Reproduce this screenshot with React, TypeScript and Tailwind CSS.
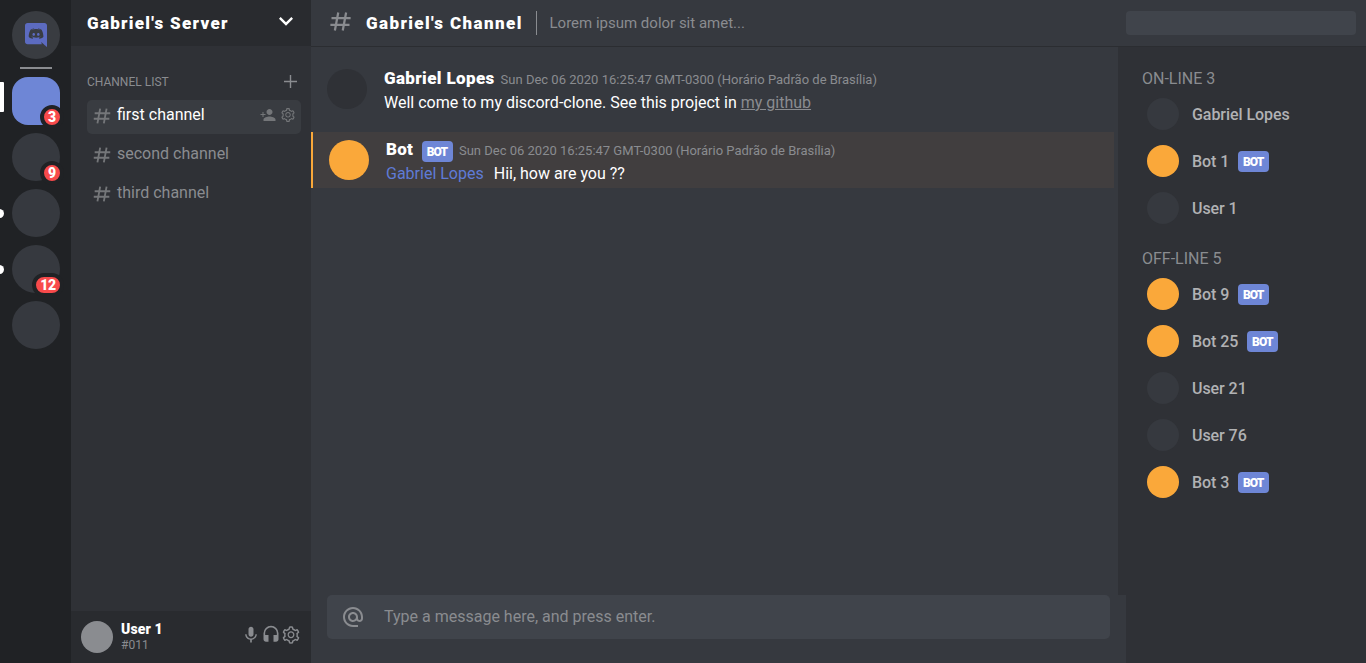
import React from "react";
import { MdExpandMore, MdAlternateEmail, MdMic, MdHeadset } from "react-icons/md";
import { AiOutlineSetting } from "react-icons/ai";
import { BiHash } from "react-icons/bi";
import { IoMdPersonAdd } from "react-icons/io";

type Server = { selected?: boolean; mentions?: number; unread?: boolean };
type Member = { name: string; bot?: boolean };

const servers: Server[] = [
  { selected: true, mentions: 3 },
  { mentions: 9 },
  { unread: true },
  { unread: true, mentions: 12 },
  {},
];

const online: Member[] = [
  { name: "Gabriel Lopes" },
  { name: "Bot 1", bot: true },
  { name: "User 1" },
];

const offline: Member[] = [
  { name: "Bot 9", bot: true },
  { name: "Bot 25", bot: true },
  { name: "User 21" },
  { name: "User 76" },
  { name: "Bot 3", bot: true },
];

const DATE = "Sun Dec 06 2020 16:25:47 GMT-0300 (Horário Padrão de Brasília)";

function DiscordLogo() {
  return (
    <svg viewBox="0 0 448 512" preserveAspectRatio="none" className="h-6 w-[22px] fill-[#5c6bc0]">
      <path d="M297.216 243.2c0 15.616-11.52 28.416-26.112 28.416-14.336 0-26.112-12.8-26.112-28.416s11.52-28.416 26.112-28.416c14.592 0 26.112 12.8 26.112 28.416zm-119.552-28.416c-14.592 0-26.112 12.8-26.112 28.416s11.776 28.416 26.112 28.416c14.592 0 26.112-12.8 26.112-28.416.256-15.616-11.52-28.416-26.112-28.416zM448 52.736V512c-64.494-56.994-43.868-38.128-118.784-107.776l13.568 47.36H52.48C23.552 451.584 0 428.032 0 398.848V52.736C0 23.552 23.552 0 52.48 0h343.04C424.448 0 448 23.552 448 52.736zm-72.96 242.688c0-82.432-36.864-149.248-36.864-149.248-36.864-27.648-71.936-26.88-71.936-26.88l-3.584 4.096c43.52 13.312 63.744 32.512 63.744 32.512-60.811-33.329-132.244-33.335-191.232-7.424-9.472 4.352-15.104 7.424-15.104 7.424s21.248-20.224 67.328-33.536l-2.56-3.072s-35.072-.768-71.936 26.88c0 0-36.864 66.816-36.864 149.248 0 0 21.504 37.12 78.08 38.912 0 0 9.472-11.52 17.152-21.248-32.512-9.728-44.8-30.208-44.8-30.208 3.766 2.636 9.976 6.053 10.496 6.4 43.21 24.198 104.588 32.126 159.744 8.96 8.96-3.328 18.944-8.192 29.44-15.104 0 0-12.8 20.992-46.336 30.464 7.68 9.728 16.896 20.736 16.896 20.736 56.576-1.792 78.336-38.912 78.336-38.912z" />
    </svg>
  );
}

function PlusIcon() {
  return (
    <svg viewBox="0 0 13 13" className="mb-px size-[13px] stroke-[#8a8c90]" strokeWidth={1.4}>
      <path d="M6.5 0v13M0 6.5h13" />
    </svg>
  );
}

function ServerButton({ selected, mentions, unread }: Server) {
  return (
    <div className="relative flex w-full justify-center">
      {selected && <span className="absolute top-[5px] left-0 h-[30px] w-1 rounded-r-[1px] bg-white" />}
      {unread && <span className="absolute top-5 -left-[5px] size-[9px] rounded-full bg-white" />}
      <div className={selected ? "relative size-12 rounded-2xl bg-[#6e86d6]" : "relative size-12 rounded-full bg-[#36393f]"}>
        {mentions && (
          <span className="absolute -right-1 -bottom-1 flex h-6 items-center rounded-full border-4 border-[#202225] bg-[#f84a4b] px-1 text-[14px] font-black tracking-[-0.5px] text-white">
            {mentions}
          </span>
        )}
      </div>
    </div>
  );
}

function ServerList() {
  return (
    <nav className="flex w-[71px] shrink-0 flex-col items-center gap-2 overflow-hidden bg-[#202225] pt-[11px]">
      <div className="flex w-full justify-center">
        <div className="flex size-12 items-center justify-center rounded-full bg-[#393c41]">
          <DiscordLogo />
        </div>
      </div>
      <div className="h-0.5 w-8 shrink-0 bg-[#8a8c90]" />
      {servers.map((server, i) => (
        <ServerButton key={i} {...server} />
      ))}
    </nav>
  );
}

function Channel({ name, selected }: { name: string; selected?: boolean }) {
  return (
    <div className={selected ? "flex h-[34px] items-center rounded-[5px] bg-[#393c41] pr-[5px] pl-1" : "flex h-[34px] items-center pr-[5px] pl-1"}>
      <BiHash size={22} className="mb-[3px] text-[#747679]" />
      <span className={selected ? "ml-1 flex-1 pb-1 text-white" : "ml-1 flex-1 pb-1 text-[#8a8c90]"}>{name}</span>
      {selected && (
        <div className="mb-1 flex items-center gap-1 text-[#747679]">
          <IoMdPersonAdd size={16} />
          <AiOutlineSetting size={16} />
        </div>
      )}
    </div>
  );
}

function ChannelPanel() {
  return (
    <aside className="flex w-60 shrink-0 flex-col bg-[#2f3136]">
      <header className="flex h-[46px] items-center justify-between bg-[#292b2f] pr-[11px] pl-4">
        <h1 className="pt-0.5 text-[17px] font-black tracking-[1.3px] text-white">Gabriel's Server</h1>
        <MdExpandMore size={28} className="mb-1 text-white" />
      </header>
      <div className="flex flex-1 flex-col gap-[5px] pt-[25px] pr-2.5 pl-4">
        <div className="mb-[3px] flex h-[21px] items-center justify-between pr-1">
          <span className="text-xs text-[#8a8c90]">CHANNEL LIST</span>
          <PlusIcon />
        </div>
        <Channel name="first channel" selected />
        <Channel name="second channel" />
        <Channel name="third channel" />
      </div>
      <footer className="flex h-[52px] items-center bg-[#292b2f] pr-2.5 pl-2.5">
        <div className="size-8 rounded-full bg-[#8a8c90]" />
        <div className="ml-2 flex flex-1 flex-col">
          <strong className="text-[14px] leading-[15px] font-black tracking-[0.1px] text-white">User 1</strong>
          <span className="mt-px text-xs leading-[15px] text-[#8a8c90]">#011</span>
        </div>
        <div className="mb-1 flex text-[#8a8c90]">
          <MdMic size={20} />
          <MdHeadset size={20} />
          <AiOutlineSetting size={20} />
        </div>
      </footer>
    </aside>
  );
}

function BotTag() {
  return (
    <span className="flex h-[21px] w-[31px] items-center justify-center rounded-[4px] bg-[#6e86d6] pt-px pr-px text-xs font-black tracking-[-0.8px] text-white">
      BOT
    </span>
  );
}

function Message({ author, bot, children }: { author: string; bot?: boolean; children: React.ReactNode }) {
  return (
    <div className={bot ? "mr-1 flex h-14 items-center border-l-2 border-[#faa83a] bg-[#413e3f] pl-4" : "mr-1 flex h-14 items-center pl-4"}>
      <div className={bot ? "size-10 rounded-full bg-[#faa83a]" : "size-10 rounded-full bg-[#2f3136]"} />
      <div className={bot ? "ml-[17px] flex flex-col pt-[3px]" : "ml-[17px] flex flex-col pt-1"}>
        <div className="flex h-6 items-center">
          <strong className={bot ? "text-[17px] font-black tracking-[0.2px] text-white" : "text-[17px] font-black tracking-[0.37px] text-white"}>
            {author}
          </strong>
          {bot && (
            <span className="mt-[3px] ml-[9px]">
              <BotTag />
            </span>
          )}
          <time className="mt-0.5 ml-1.5 text-[13px] text-[#8a8c90]">{DATE}</time>
        </div>
        <p className="leading-6 text-white">{children}</p>
      </div>
    </div>
  );
}

function MemberGroup({ title, members }: { title: string; members: Member[] }) {
  return (
    <section className="flex flex-col">
      <h2 className="h-5 leading-[22px] text-[#8a8c90]">{title}</h2>
      <div className="mt-2.5 flex flex-col gap-[15px] pl-[5px]">
        {members.map((m) => (
          <div key={m.name} className="flex h-8 items-center">
            <div className={m.bot ? "size-8 rounded-full bg-[#faa83a]" : "size-8 rounded-full bg-[#36393f]"} />
            <span className="mt-px mr-[9px] ml-[13px] font-medium tracking-[-0.06px] text-[#b1b2b4]">{m.name}</span>
            {m.bot && <BotTag />}
          </div>
        ))}
      </div>
    </section>
  );
}

export default function App() {
  return (
    <div className="flex h-screen w-full overflow-hidden bg-[#36393f] font-['Roboto',sans-serif] text-base">
      <ServerList />
      <ChannelPanel />
      <div className="flex min-w-0 flex-1 flex-col">
        <header className="flex h-[47px] shrink-0 items-center border-b border-[#2b2d31] pr-2.5 pl-4">
          <BiHash size={27} className="mb-1 text-[#8a8c90]" />
          <h1 className="ml-3 w-[157px] pt-0.5 text-[17px] font-black tracking-[1.4px] whitespace-nowrap text-white">Gabriel's Channel</h1>
          <div className="ml-[13px] h-6 w-px bg-[#8a8c90]" />
          <span className="ml-[12.5px] flex-1 text-[15px] text-[#8a8c90]">Lorem ipsum dolor sit amet...</span>
          <div className="h-6 w-[230px] rounded-[4px] bg-[#40444b]" />
        </header>
        <div className="flex min-h-0 flex-1">
          <main className="flex w-[815px] shrink-0 flex-col">
            <div className="flex min-h-0 flex-1">
              <div className="flex flex-1 flex-col gap-[15px] pt-[14px]">
                <Message author="Gabriel Lopes">
                  Well come to my discord-clone. See this project in{" "}
                  <a className="text-[#8a8c90] underline">my github</a>
                </Message>
                <Message author="Bot" bot>
                  <span className="mr-2.5 text-[#5f7bd6]">Gabriel Lopes</span>Hii, how are you ??
                </Message>
              </div>
              <div className="w-2 shrink-0 bg-[#2f3136]" />
            </div>
            <div className="h-[68px] shrink-0 px-4">
              <div className="flex h-11 items-center rounded-[5px] bg-[#40444b] pl-3.5 text-[#8a8c90]">
                <MdAlternateEmail size={24} />
                <span className="ml-[19px]">Type a message here, and press enter.</span>
              </div>
            </div>
          </main>
          <aside className="flex flex-1 flex-col gap-6 bg-[#2f3136] pt-[21px] pl-4">
            <MemberGroup title="ON-LINE 3" members={online} />
            <MemberGroup title="OFF-LINE 5" members={offline} />
          </aside>
        </div>
      </div>
    </div>
  );
}
